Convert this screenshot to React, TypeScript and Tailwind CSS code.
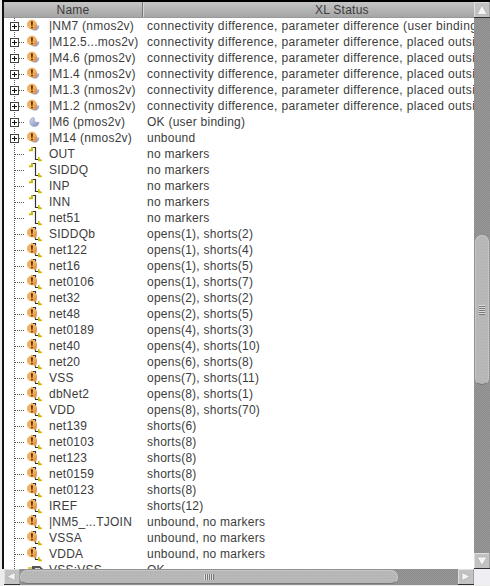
type Kind = "warn" | "blue" | "net" | "netwarn" | "pin";
type RowData = { kind: Kind; name: string; status: string };

const diff = "connectivity difference, parameter difference";

const rows: RowData[] = [
  { kind: "warn", name: "|NM7 (nmos2v)", status: `${diff} (user binding)` },
  { kind: "warn", name: "|M12.5...mos2v)", status: `${diff}, placed outside` },
  { kind: "warn", name: "|M4.6 (pmos2v)", status: `${diff}, placed outside` },
  { kind: "warn", name: "|M1.4 (nmos2v)", status: `${diff}, placed outside` },
  { kind: "warn", name: "|M1.3 (nmos2v)", status: `${diff}, placed outside` },
  { kind: "warn", name: "|M1.2 (nmos2v)", status: `${diff}, placed outside` },
  { kind: "blue", name: "|M6 (pmos2v)", status: "OK (user binding)" },
  { kind: "warn", name: "|M14 (nmos2v)", status: "unbound" },
  { kind: "net", name: "OUT", status: "no markers" },
  { kind: "net", name: "SIDDQ", status: "no markers" },
  { kind: "net", name: "INP", status: "no markers" },
  { kind: "net", name: "INN", status: "no markers" },
  { kind: "net", name: "net51", status: "no markers" },
  { kind: "netwarn", name: "SIDDQb", status: "opens(1), shorts(2)" },
  { kind: "netwarn", name: "net122", status: "opens(1), shorts(4)" },
  { kind: "netwarn", name: "net16", status: "opens(1), shorts(5)" },
  { kind: "netwarn", name: "net0106", status: "opens(1), shorts(7)" },
  { kind: "netwarn", name: "net32", status: "opens(2), shorts(2)" },
  { kind: "netwarn", name: "net48", status: "opens(2), shorts(5)" },
  { kind: "netwarn", name: "net0189", status: "opens(4), shorts(3)" },
  { kind: "netwarn", name: "net40", status: "opens(4), shorts(10)" },
  { kind: "netwarn", name: "net20", status: "opens(6), shorts(8)" },
  { kind: "netwarn", name: "VSS", status: "opens(7), shorts(11)" },
  { kind: "netwarn", name: "dbNet2", status: "opens(8), shorts(1)" },
  { kind: "netwarn", name: "VDD", status: "opens(8), shorts(70)" },
  { kind: "netwarn", name: "net139", status: "shorts(6)" },
  { kind: "netwarn", name: "net0103", status: "shorts(8)" },
  { kind: "netwarn", name: "net123", status: "shorts(8)" },
  { kind: "netwarn", name: "net0159", status: "shorts(8)" },
  { kind: "netwarn", name: "net0123", status: "shorts(8)" },
  { kind: "netwarn", name: "IREF", status: "shorts(12)" },
  { kind: "netwarn", name: "|NM5_...TJOIN", status: "unbound, no markers" },
  { kind: "netwarn", name: "VSSA", status: "unbound, no markers" },
  { kind: "netwarn", name: "VDDA", status: "unbound, no markers" },
  { kind: "pin", name: "VSS:VSS", status: "OK" },
];

function Defs() {
  return (
    <svg width="0" height="0" className="absolute">
      <defs>
        <linearGradient id="amber" x1="0" y1="0" x2="1" y2="1">
          <stop offset="0" stopColor="#f0a850" />
          <stop offset="0.5" stopColor="#fbb45c" />
          <stop offset="1" stopColor="#d08040" />
        </linearGradient>
        <linearGradient id="steel" x1="0" y1="0" x2="1" y2="1">
          <stop offset="0" stopColor="#d3dbf0" />
          <stop offset="1" stopColor="#7f8db8" />
        </linearGradient>
      </defs>
    </svg>
  );
}

function Bang() {
  return (
    <g>
      <path d="M31.8 1.8C34.8 1.8 37 4 37 6.8C37.1 9 36.4 10.2 35.8 12.4L33.6 11.3C29.5 12 27 9.6 27 6.8C27 4 29 1.8 31.8 1.8Z" fill="url(#amber)" />
      <path d="M31 3.4H32.9L32.4 8H31.5Z" fill="#2b1a08" />
      <rect x="31.2" y="8.8" width="1.5" height="1.4" fill="#2b1a08" />
    </g>
  );
}

function NetMark() {
  return (
    <g>
      <path d="M33 1.5H35.5V13.5H38" fill="none" stroke="#333" strokeWidth="1.2" />
      <path d="M31 1H33V5H29V3.2H31Z" fill="#cdbb10" />
      <path d="M28.5 5.5H33" stroke="#f1edb5" strokeWidth="0.8" />
      <path d="M38 11H39.5V12.5L42 14V15H38Z" fill="#cdbb10" />
      <path d="M38 15.5H42" stroke="#f1edb5" strokeWidth="0.8" />
    </g>
  );
}

/* Tree gutter: branch lines, expander and type icon */
function Gutter({ kind }: { kind: Kind }) {
  const branch = kind === "warn" || kind === "blue";
  return (
    <svg width="45" height="16" viewBox="4 0 45 16" className="shrink-0">
      <path d="M14.5 0V16" stroke="#555" strokeDasharray="1 1" />
      <path d={branch ? "M19 8.5H25" : "M15 8.5H25"} stroke="#555" strokeDasharray="1 1" />
      {branch && (
        <g>
          <rect x="10.5" y="4.5" width="8" height="8" fill="#fff" stroke="#444" />
          <path d="M12 8.5h5M14.5 6v5" stroke="#111" />
        </g>
      )}
      {kind === "blue" && (
        <path d="M34 3.6C31.5 3.4 29.8 5.5 29.8 8C29.8 10.8 31.8 12.6 34.4 12.6C37 12.6 39 10.8 39 8.2L35 8.2Z" fill="url(#steel)" stroke="#919dc0" strokeWidth="0.6" />
      )}
      {kind === "warn" && (
        <g>
          <path d="M35 7.5L39.2 7.2C39.4 10.5 37.2 12.6 34.5 12.6C32.5 12.6 31 11.5 30.5 10Z" fill="url(#steel)" />
          <Bang />
        </g>
      )}
      {(kind === "net" || kind === "netwarn") && <NetMark />}
      {kind === "netwarn" && <Bang />}
      {kind === "pin" && (
        <g>
          <path d="M28 6h5" stroke="#c9b92b" strokeWidth="1.5" />
          <path d="M32 4h8l3 3v6H32z" fill="#555" />
          <path d="M35 6h5v5h-5z" fill="#ddd" />
        </g>
      )}
    </svg>
  );
}

function Row({ row }: { row: RowData }) {
  const long = row.status.startsWith("connectivity");
  return (
    <div className="flex h-4 items-center whitespace-pre">
      <Gutter kind={row.kind} />
      <div className="w-[98px] shrink-0 leading-4">{row.name}</div>
      <div className={long ? "leading-4 tracking-[0.37px]" : "leading-4"}>{row.status}</div>
    </div>
  );
}

function ArrowButton({ points }: { points: string }) {
  return (
    <svg width="16" height="16" viewBox="0 0 16 16" className="shrink-0 bg-[#c2c2c2]">
      <path d="M0 .5H16M.5 0V16" stroke="#dedede" />
      <path d="M0 15.5H16" stroke="#303030" />
      <path d="M15.5 0V15" stroke="#a2a2a2" />
      <polygon points={points} fill="#f4f4f4" stroke="#a4a4a4" strokeWidth="0.6" />
    </svg>
  );
}

const trough =
  "bg-[#929292] bg-[repeating-conic-gradient(#8b8b8b_0_25%,#989898_0_50%)] bg-[length:2px_2px]";
const thumb =
  "flex items-center justify-center rounded-full border border-[#c6c6c6] border-b-[#777] bg-[#b8b8b8] bg-[radial-gradient(#b1b1b1_0.5px,transparent_0.8px)] bg-[length:3px_3px]";

export default function App() {
  return (
    <div className="flex h-[586px] w-[490px] flex-col overflow-hidden bg-[#ececec] font-['Liberation_Sans',Arial,sans-serif] text-[12px] tracking-[0.25px] text-[#3c3c3c]">
      <Defs />
      <div className="ml-[2px] h-[2px] shrink-0 bg-black" />
      <div className="ml-[2px] flex h-[567px] shrink-0 border-l-2 border-[#111]">
        <div className="flex w-[470px] shrink-0 flex-col overflow-hidden bg-white">
          <div className="flex h-4 shrink-0 border-b border-[#999] bg-linear-to-b from-[#c6c6c6] to-[#a5a5a5] leading-4">
            <div className="w-[139px] shrink-0 border-r border-[#777] text-center">Name</div>
            <div className="w-[331px] shrink-0 border-l border-[#d5d5d5] pl-[171px]">XL Status</div>
          </div>
          <div className="flex-1 overflow-hidden">
            {rows.map((row) => (
              <Row key={row.name} row={row} />
            ))}
          </div>
        </div>
        <div className={`flex w-4 shrink-0 flex-col items-center ${trough}`}>
          <ArrowButton points="8,3 13,12.5 3,12.5" />
          <div className={`mt-[217px] h-[150px] w-[14px] shrink-0 ${thumb}`}>
            <div className="h-[10px] w-[6px] bg-[repeating-linear-gradient(#dedede_0_1px,#777_1px_2px)]" />
          </div>
          <div className="flex-1" />
          <ArrowButton points="3,4 13,4 8,12.5" />
        </div>
      </div>
      <div className="flex h-4 shrink-0 pl-1">
        <div className={`flex w-[470px] shrink-0 items-center ${trough}`}>
          <ArrowButton points="3,7.5 11,3.5 11,11.5" />
          <div className={`h-[14px] w-[378px] shrink-0 ${thumb}`}>
            <div className="h-[6px] w-[10px] bg-[repeating-linear-gradient(90deg,#dedede_0_1px,#777_1px_2px)]" />
          </div>
          <div className="flex-1" />
          <ArrowButton points="4,3.5 12,7.5 4,11.5" />
        </div>
        <div className="w-4 bg-[#efeff3]" />
      </div>
    </div>
  );
}
